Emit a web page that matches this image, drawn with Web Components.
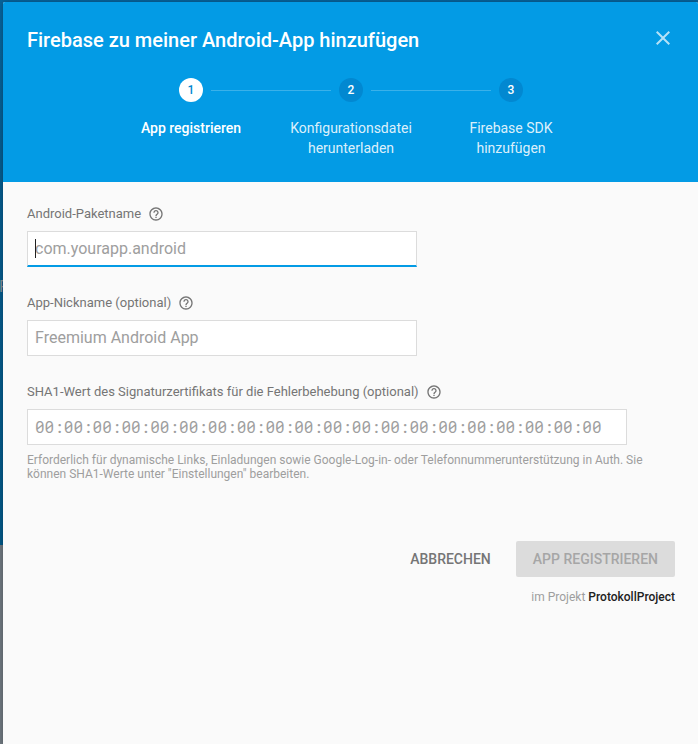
<!DOCTYPE html>
<html lang="de">
<head>
<meta charset="utf-8">
<meta name="viewport" content="width=device-width, initial-scale=1">
<title>Firebase zu meiner Android-App hinzufügen</title>
<style>
  body { margin: 0; font-family: Roboto, "Liberation Sans", sans-serif; background: #6c757c; overflow-x: hidden; }
</style>
</head>
<body>
<console-page>
  <setup-dialog heading="Firebase zu meiner Android-App hinzufügen">
    <step-list slot="steps">
      <step-item number="1" active>App registrieren</step-item>
      <step-item number="2">Konfigurationsdatei herunterladen</step-item>
      <step-item number="3">Firebase SDK hinzufügen</step-item>
    </step-list>
    <text-field label="Android-Paketname" placeholder="com.yourapp.android" current></text-field>
    <text-field label="App-Nickname (optional)" placeholder="Freemium Android App"></text-field>
    <text-field wide label="SHA1-Wert des Signaturzertifikats für die Fehlerbehebung (optional)" placeholder="00:00:00:00:00:00:00:00:00:00:00:00:00:00:00:00:00:00:00:00">Erforderlich für dynamische Links, Einladungen sowie Google-Log-in- oder Telefonnummerunterstützung in Auth. Sie können SHA1-Werte unter "Einstellungen" bearbeiten.</text-field>
    <dialog-actions project="ProtokollProject">
      <action-button>ABBRECHEN</action-button>
      <action-button disabled>APP REGISTRIEREN</action-button>
    </dialog-actions>
  </setup-dialog>
</console-page>

<script>
class BaseElement extends HTMLElement {
  connectedCallback() {
    if (this.shadowRoot) return;
    this.attachShadow({ mode: 'open' }).innerHTML = this.render();
  }
}

/* Dimmed console behind the dialog */
customElements.define('console-page', class extends BaseElement {
  render() {
    return `<style>
      :host { display: grid; min-height: 100vh; }
      .behind, .front { grid-area: 1 / 1; }
      .behind { display: grid; grid-template-rows: 545px 1fr; }
      .hero { background: linear-gradient(#07639a, #06598a 30%, #035684); display: flex; align-items: center; overflow: hidden; }
      .hero p { margin: 0; padding-top: 28px; font-size: 16px; line-height: 20px; color: #808b93; width: 3px; margin-left: -1px; }
      .rest { background: #6c757c; }
      .front { display: grid; padding: 2px 0 0 3px; position: relative; }
    </style>
    <div class="behind"><div class="hero"><p>F</p></div><div class="rest"></div></div>
    <div class="front"><slot></slot></div>`;
  }
});

customElements.define('setup-dialog', class extends BaseElement {
  render() {
    return `<style>
      :host { display: flex; flex-direction: column; background: #fafafa; border-radius: 2px 2px 0 0; overflow: hidden; box-shadow: 0 0 4px rgba(0,0,0,.25); }
      header { background: #039be5; color: #fff; padding: 24px 23px 24px 24px; }
      .bar { display: flex; justify-content: space-between; align-items: flex-start; margin-bottom: 24px; }
      h1 { margin: 0; font-size: 20px; line-height: 28px; font-weight: 500; }
      button { border: 0; padding: 0; background: none; color: inherit; width: 24px; height: 24px; opacity: .7; cursor: pointer; }
      svg { display: block; }
      main { padding: 22px 23px 24px 24px; display: flex; flex-direction: column; gap: 26px; }
    </style>
    <header>
      <div class="bar"><h1>${this.getAttribute('heading')}</h1>
        <button type="button" aria-label="Schließen"><svg width="24" height="24" viewBox="0 0 24 24" fill="currentColor"><path d="M19 6.41L17.59 5 12 10.59 6.41 5 5 6.41 10.59 12 5 17.59 6.41 19 12 13.41 17.59 19 19 17.59 13.41 12z"/></svg></button>
      </div>
      <slot name="steps"></slot>
    </header>
    <main><slot></slot></main>`;
  }
});

customElements.define('step-list', class extends BaseElement {
  render() {
    return `<style>
      :host { display: flex; justify-content: center; }
      ::slotted(*) { flex: 0 1 160px; min-width: 0; }
    </style><slot></slot>`;
  }
});

customElements.define('step-item', class extends BaseElement {
  render() {
    return `<style>
      :host { display: flex; flex-direction: column; gap: 16px; color: rgba(255,255,255,.87); font-size: 14px; line-height: 20px; text-align: center; }
      :host([active]) { color: #fff; font-weight: 500; }
      .track { display: grid; grid-template-columns: 1fr 24px 1fr; column-gap: 8px; align-items: center; }
      .track::before, .track::after { content: ""; height: 1px; background: rgba(255,255,255,.22); }
      :host(:first-child) .track::before, :host(:last-child) .track::after { background: none; }
      .dot { border-radius: 50%; background: #0288d1; color: #fff; font-size: 12px; line-height: 24px; font-weight: 500; }
      :host([active]) .dot { background: #fff; color: #0288d1; }
      .text { padding: 0 16px; }
    </style>
    <div class="track"><span class="dot">${this.getAttribute('number')}</span></div>
    <div class="text"><slot></slot></div>`;
  }
});

customElements.define('text-field', class extends BaseElement {
  render() {
    const caret = this.hasAttribute('current') ? '<span class="caret"></span>' : '';
    return `<style>
      :host { display: block; color: #757575; }
      .head { display: flex; align-items: center; gap: 7px; margin-bottom: 7px; font-size: 13px; line-height: 20px; }
      button { border: 0; padding: 0; background: none; color: inherit; flex: none; cursor: pointer; }
      svg { display: block; }
      .box { position: relative; max-width: 390px; }
      :host([wide]) .box { max-width: 600px; }
      input { display: block; box-sizing: border-box; width: 100%; height: 36px; border: 1px solid #dcdcdc; border-radius: 0; padding: 0 7px 1px; background: #fff; color: #212121; font: 16px Roboto, "Liberation Sans", sans-serif; outline: 0; }
      :host([wide]) input { font-family: "Roboto Mono", "Liberation Mono", monospace; }
      input::placeholder { color: #9e9e9e; opacity: 1; }
      :host([current]) input { border-bottom: 2px solid #039be5; padding-bottom: 0; }
      .caret { position: absolute; left: 8px; top: 8px; width: 1px; height: 19px; background: #212121; }
      .hint { font-size: 12px; line-height: 14px; color: #9e9e9e; }
      :host([wide]) .hint { margin-top: 8px; }
    </style>
    <div class="head"><label for="f">${this.getAttribute('label')}</label>
      <button type="button" aria-label="Hilfe"><svg width="16" height="16" viewBox="0 0 24 24" fill="currentColor"><path d="M11 18h2v-2h-2v2zm1-16C6.48 2 2 6.48 2 12s4.48 10 10 10 10-4.48 10-10S17.52 2 12 2zm0 18c-4.41 0-8-3.59-8-8s3.59-8 8-8 8 3.59 8 8-3.59 8-8 8zm0-14c-2.21 0-4 1.79-4 4h2c0-1.1.9-2 2-2s2 .9 2 2c0 2-3 1.75-3 5h2c0-2.25 3-2.5 3-5 0-2.21-1.79-4-4-4z"/></svg></button>
    </div>
    <div class="box"><input id="f" type="text" placeholder="${this.getAttribute('placeholder')}">${caret}</div>
    <div class="hint"><slot></slot></div>`;
  }
});

customElements.define('dialog-actions', class extends BaseElement {
  render() {
    return `<style>
      :host { display: flex; flex-direction: column; align-items: flex-end; gap: 12px; padding-top: 34px; }
      .row { display: flex; gap: 8px; }
      p { margin: 0; font-size: 12px; line-height: 16px; color: #9e9e9e; }
      strong { font-weight: 500; color: #212121; }
    </style>
    <div class="row"><slot></slot></div>
    <p>im Projekt <strong>${this.getAttribute('project')}</strong></p>`;
  }
});

customElements.define('action-button', class extends BaseElement {
  render() {
    return `<style>
      :host { display: block; }
      button { display: block; height: 36px; border: 0; border-radius: 2px; padding: 0 17px; background: none; color: #757575; font: 500 14px Roboto, "Liberation Sans", sans-serif; cursor: pointer; }
      button:disabled { background: #dcdcdc; color: #a6a6a6; cursor: default; }
    </style>
    <button type="button" ${this.hasAttribute('disabled') ? 'disabled' : ''}><slot></slot></button>`;
  }
});
</script>
</body>
</html>
